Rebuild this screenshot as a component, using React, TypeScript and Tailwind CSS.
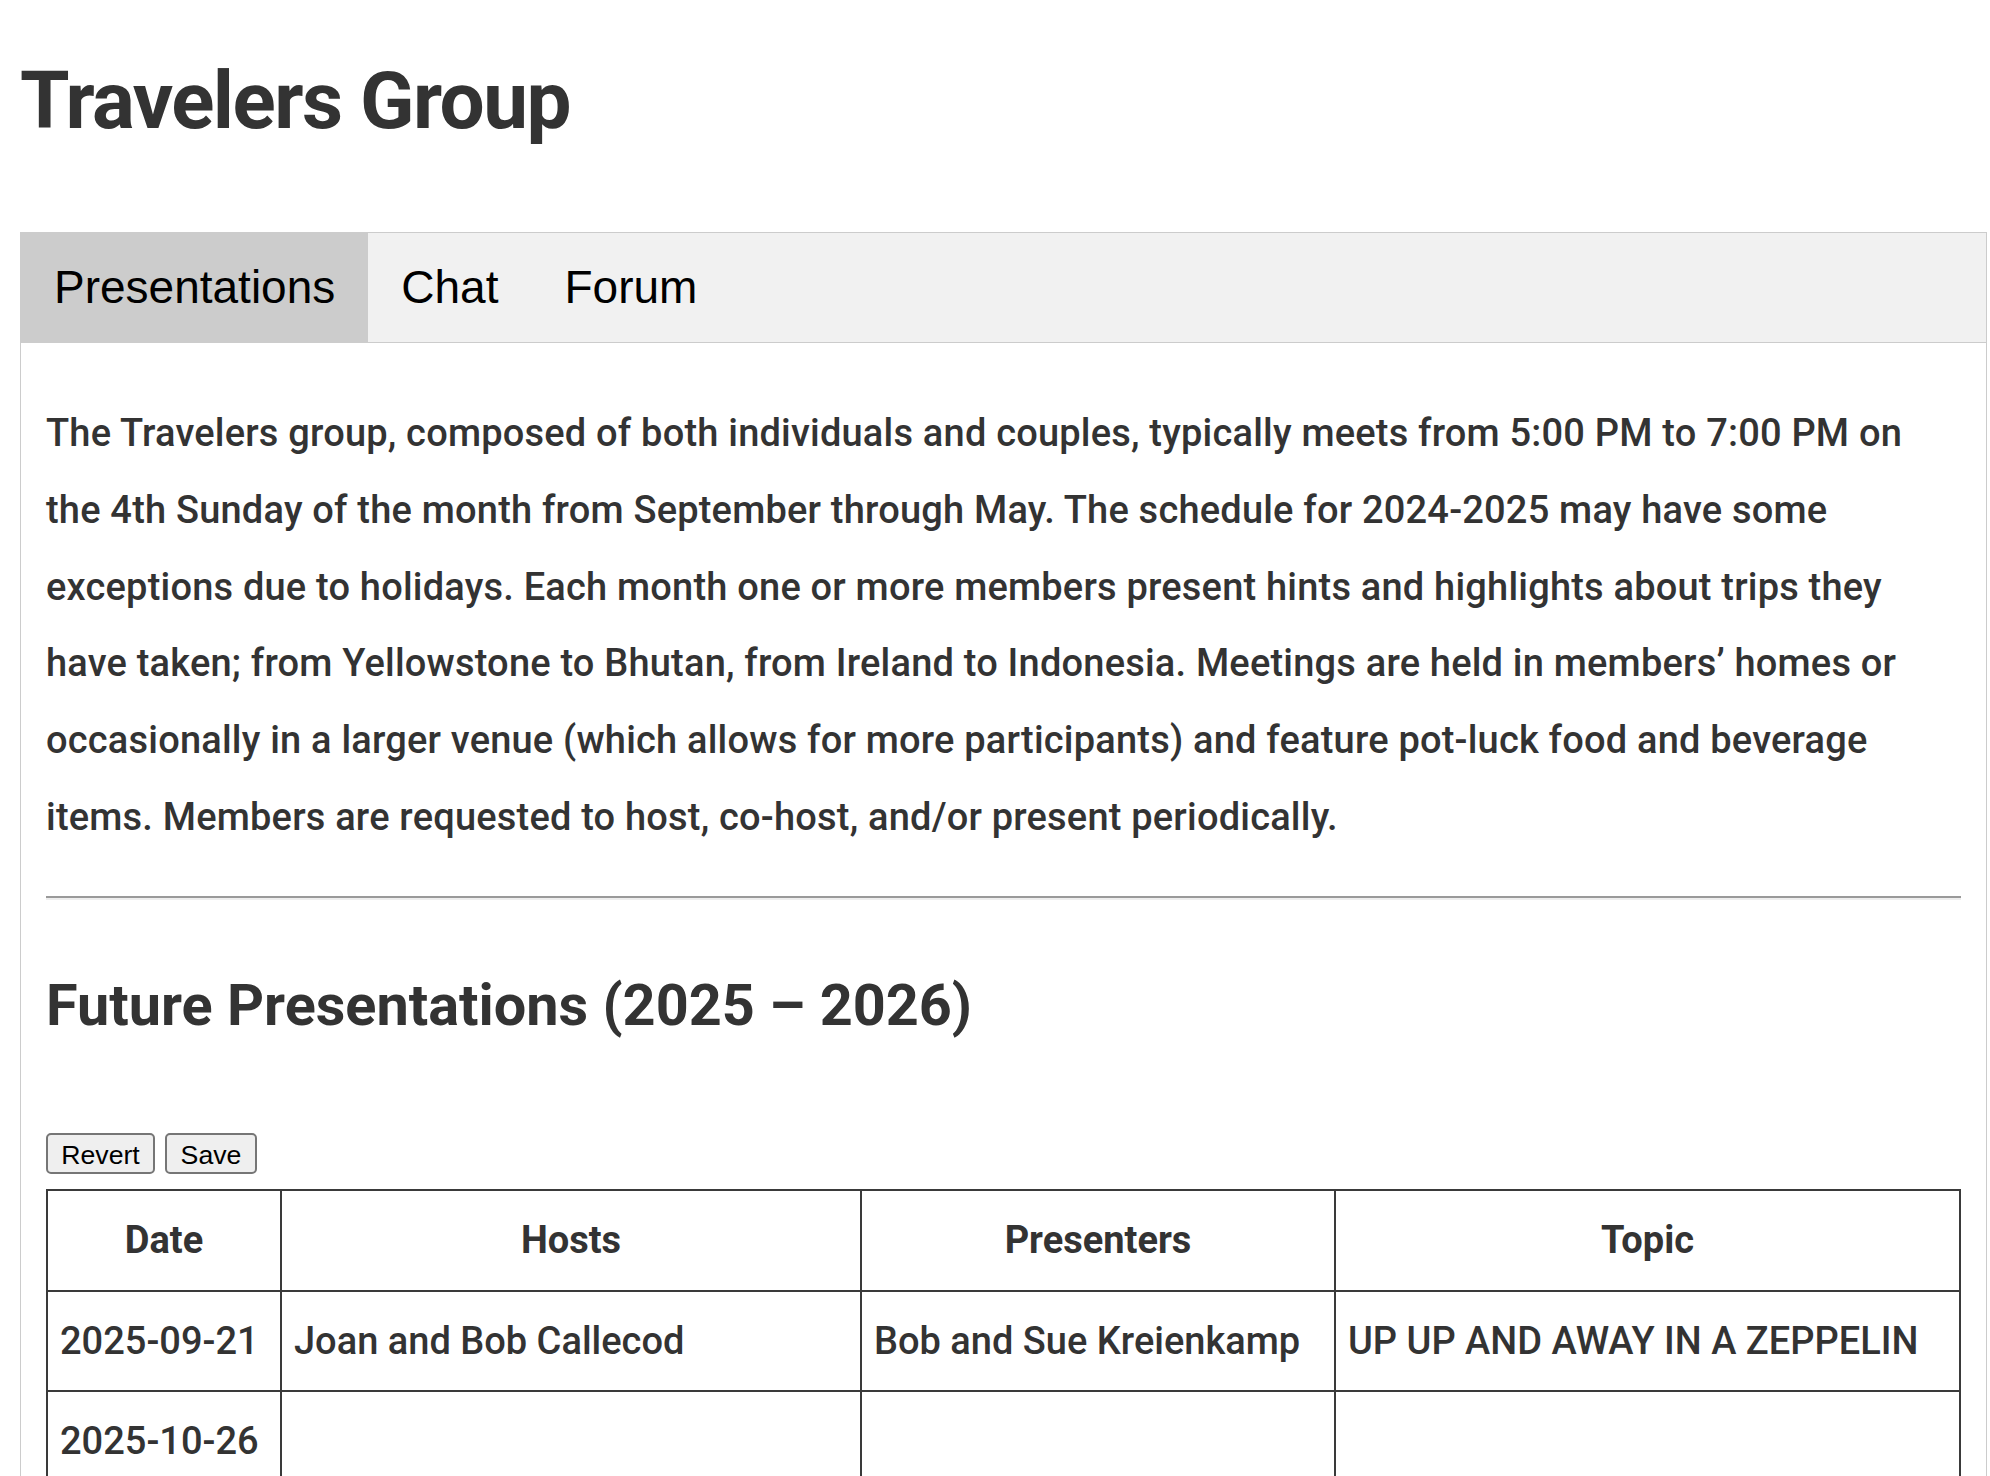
import { useState } from 'react';

type Tab = 'Presentations' | 'Chat' | 'Forum';

interface Meeting {
  date: string;
  hosts: string;
  presenters: string;
  topic: string;
}

const meetings: Meeting[] = [
  {
    date: '2025-09-21',
    hosts: 'Joan and Bob Callecod',
    presenters: 'Bob and Sue Kreienkamp',
    topic: 'UP UP AND AWAY IN A ZEPPELIN',
  },
  { date: '2025-10-26', hosts: '', presenters: '', topic: '' },
  { date: '2025-11-23', hosts: '', presenters: '', topic: '' },
];

const tabs: Tab[] = ['Presentations', 'Chat', 'Forum'];

// intro copy, broken the way the published page wraps it
const intro = [
  'The Travelers group, composed of both individuals and couples, typically meets from 5:00 PM to 7:00 PM on',
  'the 4th Sunday of the month from September through May. The schedule for 2024-2025 may have some',
  'exceptions due to holidays. Each month one or more members present hints and highlights about trips they',
  'have taken; from Yellowstone to Bhutan, from Ireland to Indonesia. Meetings are held in members’ homes or',
  'occasionally in a larger venue (which allows for more participants) and feature pot-luck food and beverage',
  'items. Members are requested to host, co-host, and/or present periodically.',
];

export default function App() {
  const [active, setActive] = useState<Tab>('Presentations');

  return (
    <div className="h-[1476px] overflow-hidden bg-white pl-[20px] font-['Roboto',sans-serif] text-[#333]">
      <div className="w-[1967px]">
        <h1 className="mt-[54px] text-[80px] leading-[94px] font-bold tracking-[-1.5px]">Travelers Group</h1>

        {/* tab strip */}
        <div className="mt-[84px] flex border border-[#ccc] bg-[#f1f1f1]">
          {tabs.map((tab) => (
            <button
              key={tab}
              onClick={() => setActive(tab)}
              className={
                active === tab
                  ? "cursor-pointer bg-[#ccc] px-[33px] py-[28px] font-['Liberation_Sans',Arial,sans-serif] text-[46px] leading-[53px] text-black"
                  : "cursor-pointer bg-transparent px-[33px] py-[28px] font-['Liberation_Sans',Arial,sans-serif] text-[46px] leading-[53px] text-black"
              }
            >
              {tab}
            </button>
          ))}
        </div>

        <div className="border-x border-b border-[#ccc] px-[25px] pt-[52px] pb-[40px]">
          <p className="text-[38px] leading-[76.8px] font-medium tracking-[0.2px] whitespace-nowrap">
            {intro.map((line, i) => (
              <span key={i} className="block">
                {line}
              </span>
            ))}
          </p>

          <hr className="mt-[40px] border-t-2 border-b-2 border-t-[#9a9a9a] border-b-[#eeeeee]" />

          <h2 className="mt-[72px] text-[57.6px] leading-[67px] font-bold">Future Presentations (2025 – 2026)</h2>

          <div className="mt-[94px] flex gap-[10px] font-['Liberation_Sans',Arial,sans-serif] text-[26.67px] text-black">
            <button className="h-[41px] w-[109px] rounded-[5px] border-2 border-[#767676] bg-[#efefef]">Revert</button>
            <button className="h-[41px] w-[92px] rounded-[5px] border-2 border-[#767676] bg-[#efefef]">Save</button>
          </div>

          <table className="mt-[15px] w-[1915px] table-fixed border-collapse text-[38px] leading-[76.8px]">
            <thead>
              <tr>
                <th className="w-[234px] border-2 border-[#3a3a3a] px-[12px] py-[11px] font-bold">Date</th>
                <th className="w-[580px] border-2 border-[#3a3a3a] px-[12px] py-[11px] font-bold">Hosts</th>
                <th className="w-[474px] border-2 border-[#3a3a3a] px-[12px] py-[11px] font-bold">Presenters</th>
                <th className="border-2 border-[#3a3a3a] px-[12px] py-[11px] font-bold">Topic</th>
              </tr>
            </thead>
            <tbody>
              {meetings.map((m) => (
                <tr key={m.date}>
                  <td className="border-2 border-[#3a3a3a] px-[12px] py-[11px] font-medium whitespace-nowrap">{m.date}</td>
                  <td className="border-2 border-[#3a3a3a] px-[12px] py-[11px] font-medium whitespace-nowrap">{m.hosts}</td>
                  <td className="border-2 border-[#3a3a3a] px-[12px] py-[11px] font-medium whitespace-nowrap">{m.presenters}</td>
                  <td className="border-2 border-[#3a3a3a] px-[12px] py-[11px] font-medium whitespace-nowrap">{m.topic}</td>
                </tr>
              ))}
            </tbody>
          </table>
        </div>
      </div>
    </div>
  );
}
